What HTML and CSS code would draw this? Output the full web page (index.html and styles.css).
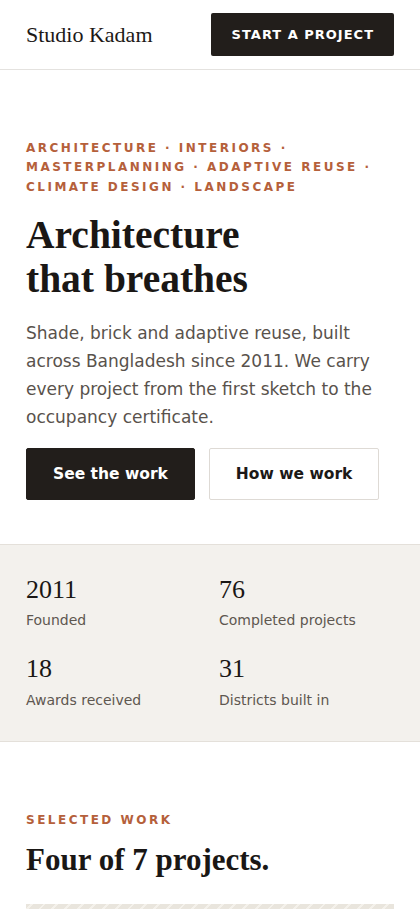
FILE: index.html
```html
<!DOCTYPE html>
<html lang="en">
<head>
<meta charset="utf-8">
<meta name="viewport" content="width=device-width, initial-scale=1">
<title>Studio Kadam — Architecture that breathes</title>
<link rel="stylesheet" href="styles.css">
</head>
<body>
  <header class="site-header">
    <a class="brand" href="#">Studio Kadam</a>
    <a class="btn btn-header" href="#">START A PROJECT</a>
  </header>

  <main>
    <section class="hero">
      <p class="eyebrow">Architecture · Interiors · Masterplanning · Adaptive reuse · Climate design · Landscape</p>
      <h1 class="hero-title">Architecture<br>that breathes</h1>
      <p class="hero-lead">Shade, brick and adaptive reuse, built across Bangladesh since 2011. We carry every project from the first sketch to the occupancy certificate.</p>
      <div class="hero-actions">
        <a class="btn btn-dark" href="#">See the work</a>
        <a class="btn btn-light" href="#">How we work</a>
      </div>
    </section>

    <section class="stats">
      <div class="stat">
        <div class="stat-num">2011</div>
        <div class="stat-label">Founded</div>
      </div>
      <div class="stat">
        <div class="stat-num">76</div>
        <div class="stat-label">Completed projects</div>
      </div>
      <div class="stat">
        <div class="stat-num">18</div>
        <div class="stat-label">Awards received</div>
      </div>
      <div class="stat">
        <div class="stat-num">31</div>
        <div class="stat-label">Districts built in</div>
      </div>
    </section>

    <section class="work">
      <p class="eyebrow">Selected work</p>
      <h2 class="work-title">Four of 7 projects.</h2>
      <div class="project-card">
        <div class="project-image"></div>
      </div>
    </section>
  </main>
</body>
</html>
```

FILE: styles.css
```css
* {
  box-sizing: border-box;
}

html, body {
  margin: 0;
  padding: 0;
  background: #ffffff;
}

body {
  font-family: "DejaVu Sans", Verdana, sans-serif;
  color: #1c1917;
}

a {
  text-decoration: none;
}

/* Top bar */
.site-header {
  display: flex;
  align-items: center;
  justify-content: space-between;
  padding: 13px 26px;
  border-bottom: 1px solid #e4e2df;
}

.brand {
  font-family: "Liberation Serif", "Times New Roman", serif;
  font-size: 22px;
  line-height: 26px;
  color: #1c1917;
}

.btn {
  display: inline-flex;
  align-items: center;
  justify-content: center;
  font-family: "DejaVu Sans", Verdana, sans-serif;
  font-weight: bold;
  border-radius: 2px;
}

.btn-header {
  height: 43px;
  padding: 0 20px 0 21px;
  font-size: 13px;
  letter-spacing: 1px;
  background: #221e1b;
  color: #ffffff;
}

/* Hero */
.hero {
  padding: 69px 26px 44px;
}

.eyebrow {
  margin: 0;
  font-size: 12px;
  line-height: 19.3px;
  font-weight: bold;
  letter-spacing: 2.5px;
  text-transform: uppercase;
  color: #b5603b;
}

.hero-title {
  margin: 16px 0 0;
  font-family: "Liberation Serif", "Times New Roman", serif;
  font-weight: bold;
  font-size: 39.5px;
  line-height: 44px;
  color: #1a1715;
}

.hero-lead {
  margin: 18px 0 0;
  font-size: 17px;
  line-height: 28px;
  color: #59524c;
}

.hero-actions {
  display: flex;
  gap: 14px;
  margin-top: 17px;
}

.btn-dark,
.btn-light {
  height: 52px;
  padding: 0 26px;
  font-size: 15.5px;
}

.btn-dark {
  background: #221e1b;
  color: #ffffff;
  border: 1px solid #221e1b;
}

.btn-light {
  background: #ffffff;
  color: #1c1917;
  border: 1px solid #dedad5;
}

/* Figures strip */
.stats {
  display: grid;
  grid-template-columns: 1fr 1fr;
  column-gap: 18px;
  row-gap: 24px;
  padding: 31px 26px 30px;
  background: #f3f1ed;
  border-top: 1px solid #e4e0da;
  border-bottom: 1px solid #e4e0da;
}

.stat-num {
  font-family: "Liberation Serif", "Times New Roman", serif;
  font-size: 26px;
  line-height: 28.6px;
  color: #1a1715;
}

.stat-label {
  margin-top: 6px;
  font-size: 14px;
  line-height: 21px;
  color: #5e5750;
}

/* Selected work */
.work {
  padding: 69px 26px 40px;
}

.work-title {
  margin: 11px 0 0;
  font-family: "Liberation Serif", "Times New Roman", serif;
  font-weight: bold;
  font-size: 31px;
  line-height: 37px;
  color: #1a1715;
}

.project-card {
  margin-top: 26px;
}

.project-image {
  height: 260px;
  background-color: #e9e5dd;
  background-image: repeating-linear-gradient(
    -45deg,
    #e9e5dd 0,
    #e9e5dd 7px,
    #f4f1eb 7px,
    #f4f1eb 9px
  );
}
```
